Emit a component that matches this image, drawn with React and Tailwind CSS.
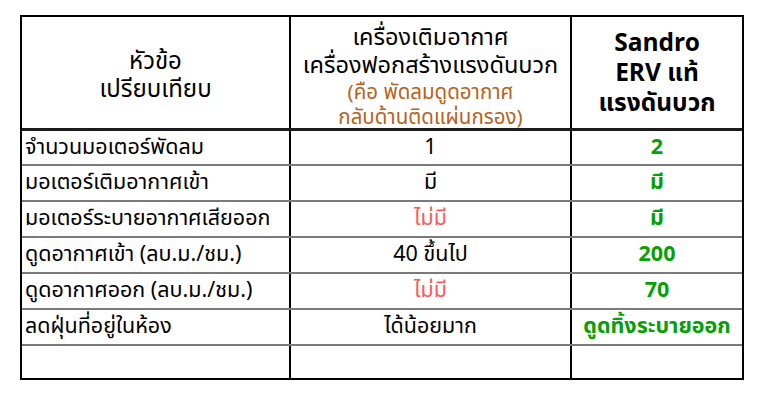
import React from "react";

const font = { fontFamily: '"Tahoma", "Noto Sans Thai", "DejaVu Sans", "Noto Sans", sans-serif' };

const rows = [
  { label: "จำนวนมอเตอร์พัดลม", mid: "1", midRed: false, right: "2" },
  { label: "มอเตอร์เติมอากาศเข้า", mid: "มี", midRed: false, right: "มี" },
  { label: "มอเตอร์ระบายอากาศเสียออก", mid: "ไม่มี", midRed: true, right: "มี" },
  { label: "ดูดอากาศเข้า (ลบ.ม./ชม.)", mid: "40 ขึ้นไป", midRed: false, right: "200" },
  { label: "ดูดอากาศออก (ลบ.ม./ชม.)", mid: "ไม่มี", midRed: true, right: "70" },
  { label: "ลดฝุ่นที่อยู่ในห้อง", mid: "ได้น้อยมาก", midRed: false, right: "ดูดทิ้งระบายออก" },
];

export default function App() {
  return (
    <div className="w-[768px] h-[401px] bg-white pt-[15px] pl-[20px]" style={font}>
      <div className="w-[724px] border-2 border-black text-black">
        <div className="flex h-[114px] border-b-[3px] border-[#1c1c1c]">
          <div className="w-[269px] border-r-2 border-black flex flex-col items-center justify-center pt-[7px] text-[24px] leading-[28px]">
            <div>หัวข้อ</div>
            <div>เปรียบเทียบ</div>
          </div>
          <div className="w-[281px] border-r-2 border-black flex flex-col items-center justify-center pt-[8px]">
            <div className="text-[23.5px] leading-[28px]">เครื่องเติมอากาศ</div>
            <div className="text-[23.5px] leading-[28px]">เครื่องฟอกสร้างแรงดันบวก</div>
            <div className="text-[20.5px] leading-[25px] text-[#b8621c]">(คือ พัดลมดูดอากาศ</div>
            <div className="text-[20.5px] leading-[25px] text-[#b8621c]">กลับด้านติดแผ่นกรอง)</div>
          </div>
          <div className="flex-1 flex flex-col items-center justify-center pt-[3px] font-bold text-[24.5px] leading-[30px]">
            <div>Sandro</div>
            <div>ERV แท้</div>
            <div>แรงดันบวก</div>
          </div>
        </div>
        {rows.map((r, i) => (
          <div
            key={i}
            className={`flex border-b-2 border-[#7a7a7a] text-[21.5px] leading-[30px] ${i === 0 ? "h-[35px]" : "h-[36px]"}`}
          >
            <div className="w-[269px] border-r-2 border-black flex items-center pl-[3px]">{r.label}</div>
            <div className={`w-[281px] border-r-2 border-black flex items-center justify-center ${r.midRed ? "text-[#ff5a5a]" : ""}`}>
              {r.mid}
            </div>
            <div className="flex-1 flex items-center justify-center font-bold text-[#05a005]">{r.right}</div>
          </div>
        ))}
        <div className="flex h-[32px]">
          <div className="w-[269px] border-r-2 border-black"></div>
          <div className="w-[281px] border-r-2 border-black"></div>
          <div className="flex-1"></div>
        </div>
      </div>
    </div>
  );
}
